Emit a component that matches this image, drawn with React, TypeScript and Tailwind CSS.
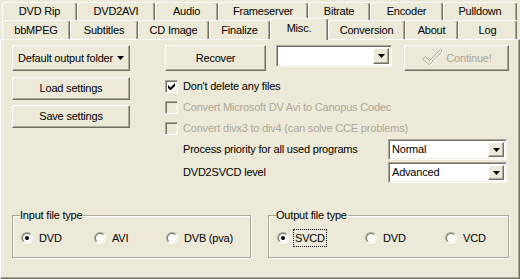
import type { ReactNode } from 'react'

const raised =
  'border border-t-white border-l-white border-r-[#716f64] border-b-[#716f64] shadow-[inset_-1px_-1px_0_#aca899]'
const sunken =
  'border border-t-[#aca899] border-l-[#aca899] border-r-white border-b-white shadow-[inset_1px_1px_0_#716f64,inset_-1px_-1px_0_#f1efe2]'

const row1 = [
  ['DVD Rip', 75], ['DVD2AVI', 78], ['Audio', 63], ['Frameserver', 90],
  ['Bitrate', 62], ['Encoder', 73], ['Pulldown', 74],
] as const
const row2 = [
  ['bbMPEG', 68], ['Subtitles', 68], ['CD Image', 71], ['Finalize', 61],
  ['Misc.', 58], ['Conversion', 77], ['About', 53], ['Log', 59],
] as const

function Tab({ label, width, selected }: { label: string; width: number; selected?: boolean }) {
  return (
    <div
      className={`flex items-center justify-center rounded-t-[3px] border-l border-t border-r border-l-white border-t-white border-r-[#716f64] shadow-[inset_-1px_0_0_#aca899] bg-[#ece9d8] ${
        selected ? 'relative z-10 h-[22px] -mb-[1px] pb-[2px]' : 'h-full'
      }`}
      style={{ width }}
    >
      {label}
    </div>
  )
}

function Button({ children, className = '', disabled }: { children: ReactNode; className?: string; disabled?: boolean }) {
  return (
    <div className={`flex items-center justify-center ${raised} ${disabled ? 'text-[#aca899]' : ''} ${className}`}>
      {children}
    </div>
  )
}

function Arrow() {
  return (
    <svg width="7" height="4" viewBox="0 0 7 4">
      <path d="M0 0h7L3.5 4z" fill="#000" />
    </svg>
  )
}

function Combo({ value, className = '' }: { value?: string; className?: string }) {
  return (
    <div className={`flex items-stretch p-[2px] bg-white ${sunken} ${className}`}>
      <div className="flex-1 flex items-center pl-[1px] leading-none">{value}</div>
      <div className={`w-[16px] flex items-center justify-center bg-[#ece9d8] ${raised}`}>
        <Arrow />
      </div>
    </div>
  )
}

function Checkbox({ label, checked, disabled }: { label: string; checked?: boolean; disabled?: boolean }) {
  return (
    <div className="h-[21px] flex items-center">
      <div className={`w-[13px] h-[13px] flex items-center justify-center ${sunken} ${disabled ? 'bg-[#ece9d8]' : 'bg-white'}`}>
        {checked && (
          <svg width="7" height="7" viewBox="0 0 7 7">
            <path d="M0 2v3l2 2h1l4-4V0L2.5 4.5z" fill="#000" />
          </svg>
        )}
      </div>
      <span className={`ml-[5px] ${disabled ? 'text-[#aca899]' : ''}`}>{label}</span>
    </div>
  )
}

function Radio({ label, checked, focus, width }: { label: string; checked?: boolean; focus?: boolean; width: number }) {
  return (
    <div className="flex items-center" style={{ width }}>
      <div className="w-[12px] h-[12px] rounded-full border border-t-[#aca899] border-l-[#aca899] border-r-white border-b-white">
        <div className="w-full h-full rounded-full border border-t-[#716f64] border-l-[#716f64] border-r-[#f1efe2] border-b-[#f1efe2] bg-white flex items-center justify-center">
          {checked && <div className="w-[4px] h-[4px] rounded-full bg-black" />}
        </div>
      </div>
      <span className={`ml-[5px] px-[1px] ${focus ? 'outline outline-1 outline-dotted outline-black' : ''}`}>{label}</span>
    </div>
  )
}

function Group({ title, children, className = '' }: { title: string; children: ReactNode; className?: string }) {
  return (
    <div className={`relative h-[43px] border border-[#aca899] shadow-[inset_1px_1px_0_#fff,1px_1px_0_#fff] ${className}`}>
      <span className="absolute left-[7px] -top-[8px] bg-[#ece9d8] pr-[1px] leading-[14px]">{title}</span>
      <div className="flex items-center h-full pt-[3px] pl-[8px]">{children}</div>
    </div>
  )
}

export default function App() {
  return (
    <div
      className="w-[520px] h-[279px] bg-[#ece9d8] text-black text-[11px] tracking-[-0.2px] select-none overflow-hidden"
      style={{ fontFamily: '"Liberation Sans", Arial, sans-serif' }}
    >
      {/* Tabs */}
      <div className="pt-[2px] pl-[2px]">
        <div className="flex h-[18px]">
          {row1.map(([l, w]) => <Tab key={l} label={l} width={w} />)}
        </div>
        <div className="flex items-end h-[19px]">
          {row2.map(([l, w]) => <Tab key={l} label={l} width={w} selected={l === 'Misc.'} />)}
        </div>
      </div>

      {/* Panel */}
      <div className="h-[240px] border border-t-white border-l-white border-r-[#716f64] border-b-[#716f64] shadow-[inset_-1px_-1px_0_#aca899]">
        <div className="flex pt-[5px]">
          <div className="ml-[11px] w-[118px] flex flex-col">
            <Button className="h-[26px] gap-[4px]">
              Default output folder <Arrow />
            </Button>
            <Button className="h-[23px] mt-[6px]">Load settings</Button>
            <Button className="h-[23px] mt-[5px]">Save settings</Button>
          </div>

          <div className="ml-[35px] flex flex-col">
            <div className="flex items-start">
              <Button className="w-[101px] h-[26px]">Recover</Button>
              <Combo className="ml-[10px] w-[116px] h-[22px]" />
              <Button disabled className="ml-[12px] w-[105px] h-[26px] gap-[3px]">
                <svg width="22" height="18" viewBox="0 0 22 18">
                  <path d="M1.5 10.5l3-3 4 4 11-11 1.5 1.5-12.5 13.5z" fill="none" stroke="#fff" transform="translate(1 1)" />
                  <path d="M1.5 10.5l3-3 4 4 11-11 1.5 1.5-12.5 13.5z" fill="none" stroke="#aca899" />
                </svg>
                Continue!
              </Button>
            </div>

            <div className="mt-[5px]">
              <Checkbox label="Don't delete any files" checked />
              <Checkbox label="Convert Microsoft DV Avi to Canopus Codec" disabled />
              <Checkbox label="Convert divx3 to div4 (can solve CCE problems)" disabled />
            </div>

            <div className="flex items-center pl-[18px]">
              <span className="w-[205px]">Process priority for all used programs</span>
              <Combo value="Normal" className="w-[119px] h-[21px]" />
            </div>
            <div className="flex items-center pl-[18px] mt-[2px]">
              <span className="w-[205px]">DVD2SVCD level</span>
              <Combo value="Advanced" className="w-[119px] h-[21px]" />
            </div>
          </div>
        </div>

        <div className="flex mt-[32px]">
          <Group title="Input file type" className="ml-[11px] w-[239px]">
            <Radio label="DVD" checked width={73} />
            <Radio label="AVI" width={72} />
            <Radio label="DVB (pva)" width={80} />
          </Group>
          <Group title="Output file type" className="ml-[17px] w-[241px]">
            <Radio label="SVCD" checked focus width={88} />
            <Radio label="DVD" width={80} />
            <Radio label="VCD" width={60} />
          </Group>
        </div>
      </div>
    </div>
  )
}
